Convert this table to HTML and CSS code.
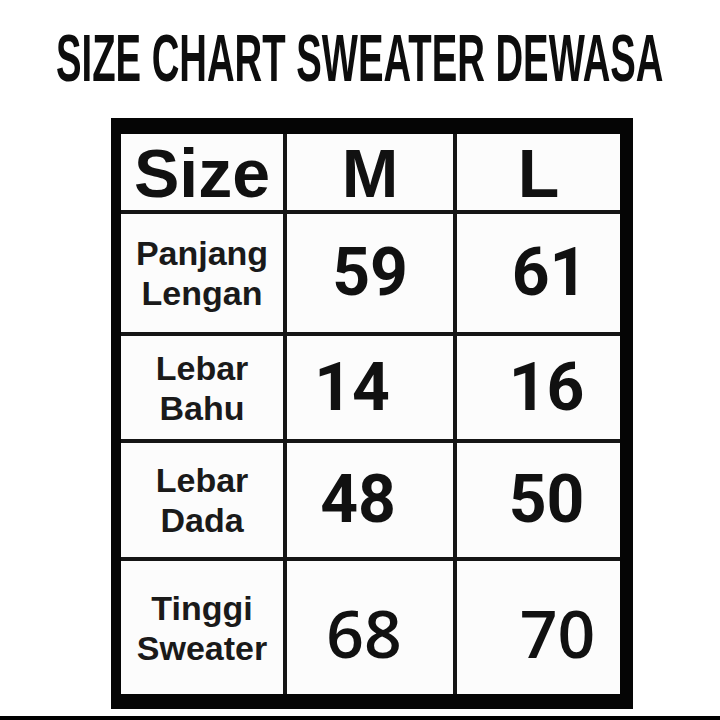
FILE: index.html
```html
<!DOCTYPE html>
<html lang="id">
<head>
<meta charset="utf-8">
<title>Size Chart Sweater Dewasa</title>
<link rel="stylesheet" href="styles.css">
</head>
<body>
<div class="title"><span class="title-text">SIZE CHART SWEATER DEWASA</span></div>
<div class="chart">
  <div class="grid">
    <div class="cell head">Size</div>
    <div class="cell head">M</div>
    <div class="cell head">L</div>

    <div class="cell label">Panjang<br>Lengan</div>
    <div class="cell num">59</div>
    <div class="cell num shift-r-md">61</div>

    <div class="cell label">Lebar<br>Bahu</div>
    <div class="cell num shift-l-lg">14</div>
    <div class="cell num shift-r-sm">16</div>

    <div class="cell label">Lebar<br>Dada</div>
    <div class="cell num shift-l-md">48</div>
    <div class="cell num shift-r-sm">50</div>

    <div class="cell label">Tinggi<br>Sweater</div>
    <div class="cell num alt shift-l-sm">68</div>
    <div class="cell num alt shift-r-lg">70</div>
  </div>
</div>
<div class="rule"></div>
</body>
</html>
```
FILE: styles.css
```css
html, body {
  margin: 0;
  padding: 0;
  background: #ffffff;
}
body {
  width: 720px;
  height: 720px;
  overflow: hidden;
  color: #111111;
}
.title {
  height: 118px;
  box-sizing: border-box;
  padding-top: 25px;
  display: flex;
  justify-content: center;
  align-items: flex-start;
  font-family: "Liberation Sans", Arial, sans-serif;
  font-weight: 700;
  font-size: 66px;
  line-height: 66px;
  white-space: nowrap;
  overflow: hidden;
}
.title-text {
  flex: none;
  display: block;
  transform: scaleX(0.58);
  transform-origin: center;
  color: #0d0d0d;
}
.chart {
  width: 522px;
  margin-left: 111px;
  box-sizing: border-box;
  background: #050505;
  padding: 16px 13px 15px 10px;
}
.grid {
  display: grid;
  grid-template-columns: 162px 166px 163px;
  grid-template-rows: 76px 118px 103px 114px 133px;
  gap: 4px;
  background: #151515;
}
.cell {
  background: #fcfcfc;
  display: flex;
  align-items: center;
  justify-content: center;
  text-align: center;
  box-sizing: border-box;
}
.head {
  font-family: "Liberation Sans", Arial, sans-serif;
  font-weight: 700;
  font-size: 68px;
  line-height: 1;
  padding-top: 2px;
}
.label {
  font-family: "Liberation Sans", Arial, sans-serif;
  font-weight: 700;
  font-size: 34px;
  line-height: 40px;
  color: #1a1a1a;
}
.num {
  font-family: Roboto, "Liberation Sans", sans-serif;
  font-weight: 700;
  font-size: 66px;
  line-height: 1;
}
.num.alt {
  font-family: "Open Sans", "Noto Sans", sans-serif;
  font-weight: 600;
  padding-top: 8px;
}
.shift-l-sm { padding-right: 12px; }
.shift-l-md { padding-right: 24px; }
.shift-l-lg { padding-right: 36px; }
.shift-r-sm { padding-left: 16px; }
.shift-r-md { padding-left: 22px; }
.shift-r-lg { padding-left: 38px; }
.rule {
  margin-top: 7px;
  height: 4px;
  background: #000000;
}
```
